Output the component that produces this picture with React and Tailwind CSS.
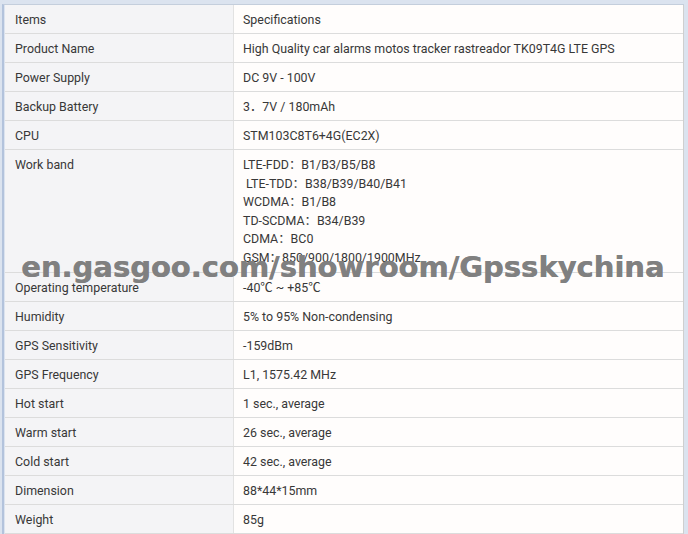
const rows = [
  ["Items", "Specifications"],
  ["Product Name", "High Quality car alarms motos tracker rastreador TK09T4G LTE GPS"],
  ["Power Supply", "DC 9V - 100V"],
  ["Backup Battery", "3．7V / 180mAh"],
  ["CPU", "STM103C8T6+4G(EC2X)"],
];

const rows2 = [
  ["Operating temperature", "-40℃ ~ +85℃"],
  ["Humidity", "5% to 95% Non-condensing"],
  ["GPS Sensitivity", "-159dBm"],
  ["GPS Frequency", "L1, 1575.42 MHz"],
  ["Hot start", "1 sec., average"],
  ["Warm start", "26 sec., average"],
  ["Cold start", "42 sec., average"],
  ["Dimension", "88*44*15mm"],
  ["Weight", "85g"],
];

const bands = [
  "LTE-FDD：B1/B3/B5/B8",
  "\u00a0LTE-TDD：B38/B39/B40/B41",
  "WCDMA：B1/B8",
  "TD-SCDMA：B34/B39",
  "CDMA：BC0",
  "GSM：850/900/1800/1900MHz",
];

const Row = ({ label, value }) => (
  <div className="flex h-[29px] border-b border-[#dcdcdc]">
    <div className="w-[229px] shrink-0 flex items-center pl-[10px] pt-[2px] bg-[#f4f4f6] border-r border-[#e2e2e2]">{label}</div>
    <div className="flex-1 flex items-center pl-[9px] pt-[2px] bg-[#fffdfc]">{value}</div>
  </div>
);

const App = () => {
  return (
    <div
      className="relative w-[688px] h-[534px] overflow-hidden bg-[#dbe3ef] text-[12.4px] text-[#383838]"
      style={{ fontFamily: 'Roboto, "Noto Sans CJK SC", sans-serif' }}
    >
      <div className="ml-[2px] mt-[4px] mr-[4px] border-l-2 border-t border-[#b3c3dc] border-t-[#c4cedc]">
        <div className="ml-[1px] border-r border-[#cfcfcf]">
          {rows.map(([l, v]) => (
            <Row key={l} label={l} value={v} />
          ))}
          <div className="flex h-[123px] border-b border-[#dcdcdc]">
            <div className="w-[229px] shrink-0 pl-[10px] pt-[6px] leading-[18.6px] bg-[#f4f4f6] border-r border-[#e2e2e2]">
              Work band
            </div>
            <div className="flex-1 pl-[9px] pt-[6px] leading-[18.6px] bg-[#fffdfc]">
              {bands.map((b) => (
                <div key={b}>{b}</div>
              ))}
            </div>
          </div>
          {rows2.map(([l, v]) => (
            <Row key={l} label={l} value={v} />
          ))}
        </div>
      </div>
      <div
        className="absolute left-[21px] top-[246px] text-[29px] font-bold text-[#808080]/90 whitespace-nowrap [text-shadow:0.5px_0_0_#808080]"
        style={{ fontFamily: '"DejaVu Sans", sans-serif' }}
      >
        en.gasgoo.com/showroom/Gpsskychina
      </div>
    </div>
  );
};

export default App;
